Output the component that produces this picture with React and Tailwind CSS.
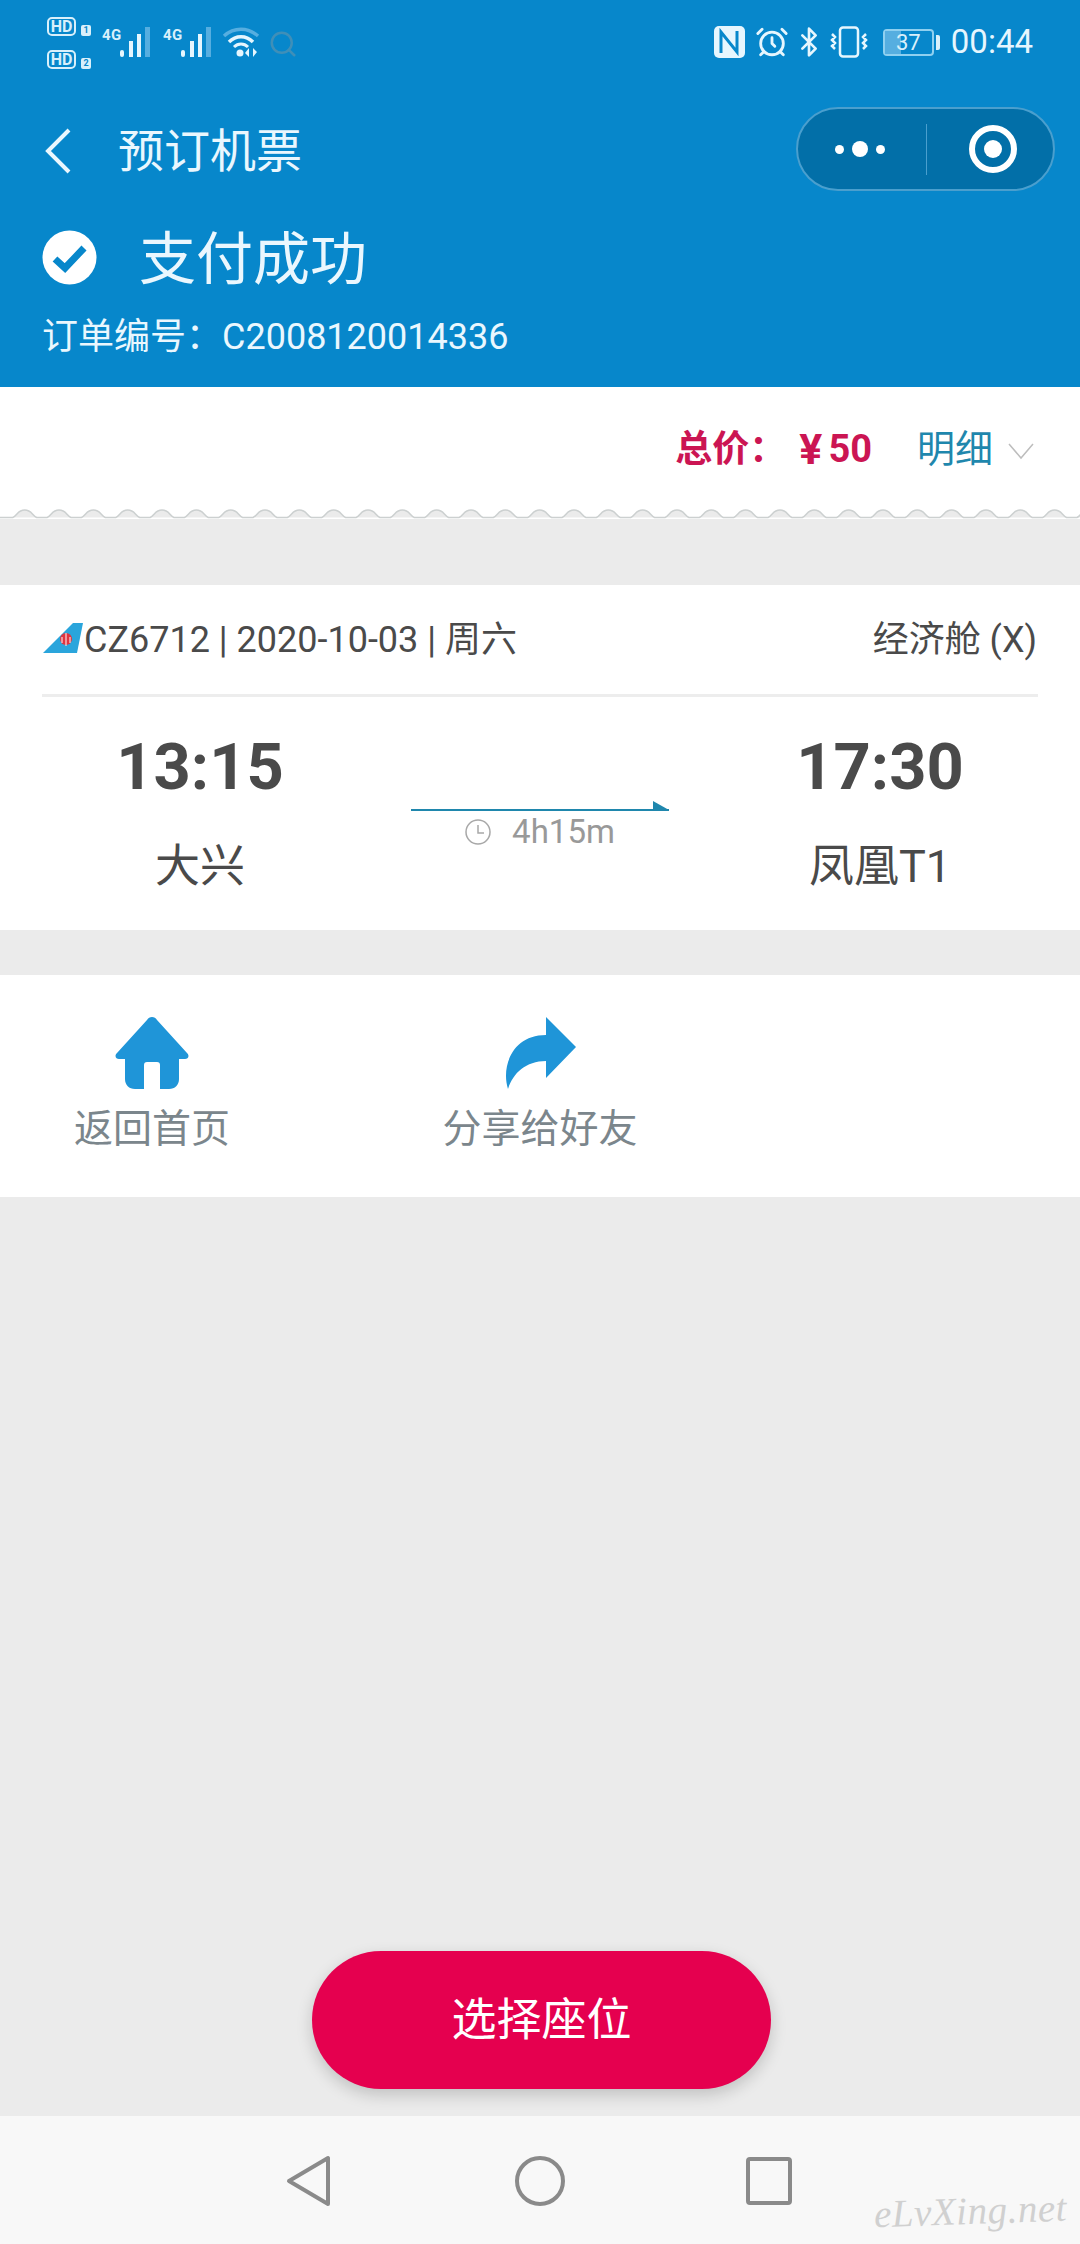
import { AlarmClock, Bluetooth, Search } from 'lucide-react';

const font = { fontFamily: 'Roboto, "Noto Sans CJK SC", sans-serif' };

const SimCard = ({ n }) => (
	<div className="flex items-end gap-[5px] h-[19px]">
		<div className="w-[29px] h-[19px] border-[2.5px] border-[#d9f0fb] rounded-[5px] flex items-center justify-center text-[16px] leading-none font-bold text-[#d9f0fb]">
			HD
		</div>
		<div className="w-[10px] h-[11px] bg-[#d9f0fb] rounded-[2px] flex items-center justify-center text-[9px] leading-none font-bold text-[#0787cb]">
			{n}
		</div>
	</div>
);

const Signal = () => (
	<div className="flex items-start w-[50px] h-[30px] relative">
		<span className="text-[15px] leading-[16px] font-bold text-[#d9f0fb] tracking-[0.5px]">4G</span>
		<svg width="32" height="30" viewBox="0 0 32 30" className="absolute left-[18px] top-0">
			<rect x="0" y="23" width="4" height="7" rx="2" fill="#e6f6fe" />
			<rect x="9" y="14" width="4" height="16" fill="#e6f6fe" />
			<rect x="17" y="7" width="4" height="23" fill="#e6f6fe" />
			<rect x="25" y="0" width="5" height="30" fill="#56aee0" />
		</svg>
	</div>
);

const Wifi = () => (
	<svg width="38" height="31" viewBox="0 0 38 31" fill="none">
		<path d="M2 9C12 0 26 0 36 9" stroke="#56aee0" strokeWidth="3.5" />
		<path d="M7 15C14 8 24 8 31 15" stroke="#e6f6fe" strokeWidth="3.5" />
		<path d="M12 20C16 16 22 16 26 20" stroke="#e6f6fe" strokeWidth="3" />
		<circle cx="18" cy="26" r="3.5" fill="#e6f6fe" />
		<path d="M27 21L27 30L23 26ZM31 21L35 25L31 30Z" fill="#e6f6fe" />
	</svg>
);

const Nfc = () => (
	<svg width="31" height="32" viewBox="0 0 31 32">
		<rect width="31" height="32" rx="5" fill="#e6f6fe" />
		<path d="M7 27V6L23 26V5" fill="none" stroke="#0787cb" strokeWidth="3" />
	</svg>
);

const Vibrate = () => (
	<svg width="40" height="32" viewBox="0 0 40 32" fill="none" stroke="#e6f6fe" strokeWidth="2.5">
		<rect x="11" y="1.5" width="18" height="29" rx="3" />
		<path d="M3 8l3 3-3 3 3 3-3 3 3 3M37 8l-3 3 3 3-3 3 3 3-3 3" />
	</svg>
);

const Battery = () => (
	<div className="flex items-center gap-[2px]">
		<div className="relative w-[51px] h-[27px] border-2 border-[#8fd0f0] rounded-[4px] flex items-center justify-center text-[22px] leading-none text-[#d9f0fb]">
			<div className="absolute left-0 top-0 bottom-0 w-[16px] bg-[#56aee0]" />
			<span className="relative">37</span>
		</div>
		<div className="w-[4px] h-[15px] bg-[#d9f0fb] rounded-r-[2px]" />
	</div>
);

const StatusBar = () => (
	<div className="h-[90px] flex justify-between pl-[47px] pr-[47px] text-[#e6f6fe]">
		<div className="flex items-start pt-[17px]">
			<div className="flex flex-col gap-[14px] w-[55px]">
				<SimCard n="1" />
				<SimCard n="2" />
			</div>
			<div className="flex mt-[10px] gap-[11px]">
				<Signal />
				<Signal />
			</div>
			<div className="mt-[10px] ml-[9px]">
				<Wifi />
			</div>
			<Search size={30} strokeWidth={2} className="mt-[12px] ml-[8px] text-[#3f8fb8]" />
		</div>
		<div className="flex items-start pt-[26px]">
			<Nfc />
			<AlarmClock size={34} strokeWidth={2} className="ml-[10px] -mt-[1px]" />
			<Bluetooth size={32} strokeWidth={2} className="ml-[4px]" />
			<div className="ml-[4px]">
				<Vibrate />
			</div>
			<div className="ml-[14px] mt-[3px]">
				<Battery />
			</div>
			<span className="ml-[11px] text-[33px] leading-[32px]">00:44</span>
		</div>
	</div>
);

const Capsule = () => (
	<div className="w-[259px] h-[84px] rounded-full bg-[#026fa8] border-2 border-[#4a9fce] flex items-center">
		<div className="w-[128px] flex items-center justify-center gap-[8px] pr-[4px]">
			<span className="w-[9px] h-[9px] rounded-full bg-white" />
			<span className="w-[16px] h-[16px] rounded-full bg-white" />
			<span className="w-[9px] h-[9px] rounded-full bg-white" />
		</div>
		<div className="w-[1px] h-[51px] bg-[#4a9fce]" />
		<div className="flex-1 flex items-center justify-center pl-[6px]">
			<div className="w-[48px] h-[48px] rounded-full border-[6px] border-white flex items-center justify-center">
				<span className="w-[18px] h-[18px] rounded-full bg-white" />
			</div>
		</div>
	</div>
);

const Header = () => (
	<div className="h-[387px] bg-[#0787cb] text-white shrink-0">
		<StatusBar />
		<div className="h-[120px] flex items-start justify-between pl-[45px] pr-[25px] pt-[17px]">
			<div className="flex items-center h-[84px] pt-[3px]">
				<svg width="26" height="46" viewBox="0 0 26 46" fill="none" stroke="#eaf7fe" strokeWidth="4">
					<path d="M24 2L3 23L24 44" />
				</svg>
				<span className="ml-[47px] text-[46px] leading-none text-[#eaf7fe]">预订机票</span>
			</div>
			<Capsule />
		</div>
		<div className="flex items-center pl-[42px] h-[90px] mt-[4px]">
			<svg width="55" height="55" viewBox="0 0 55 55" className="-mt-[3px]">
				<circle cx="27.5" cy="27.5" r="27" fill="white" />
				<path d="M13 29L23 38L42 18" fill="none" stroke="#0787cb" strokeWidth="7" />
			</svg>
			<span className="ml-[42px] text-[57px] leading-none text-[#eaf7fe]">支付成功</span>
		</div>
		<div className="pl-[42px] mt-[11px] text-[36px] leading-[44px] text-[#eaf7fe]">
			订单编号：C2008120014336
		</div>
	</div>
);

const Scallop = () => {
	// 34px period bumps along the torn edge of the price strip
	const bumps = Array.from({ length: 32 }, (_, i) => 24.7 + i * 34.33);
	const d = bumps.map((x) => `M${x - 12} 8.5C${x - 7} 6 ${x - 7} 1 ${x} 1C${x + 7} 1 ${x + 7} 6 ${x + 12} 8.5Z`).join('');
	const line = bumps.reduce(
		(acc, x) => `${acc}L${x - 12} 8.5C${x - 7} 6 ${x - 7} 1 ${x} 1C${x + 7} 1 ${x + 7} 6 ${x + 12} 8.5`,
		'M-20 8.5',
	);
	return (
		<svg width="1080" height="10" viewBox="0 0 1080 10" className="block">
			<path d={d} fill="#ebebeb" />
			<path d={line} fill="none" stroke="#ccd0d0" strokeWidth="1.5" />
		</svg>
	);
};

const PriceRow = () => (
	<div className="shrink-0">
		<div className="h-[122px] bg-white flex items-center justify-end pr-[46px] pt-[2px]">
			<span className="text-[37px] leading-none font-bold text-[#cb1553]">总价：</span>
			<span className="ml-[13px] text-[43px] leading-none font-bold text-[#cb1553]">¥</span>
			<span className="ml-[6px] text-[38px] leading-none font-bold text-[#cb1553]">50</span>
			<span className="ml-[45px] text-[38px] leading-none text-[#1f87ad]">明细</span>
			<svg width="26" height="17" viewBox="0 0 26 17" fill="none" stroke="#bdbdbd" strokeWidth="1.5" className="ml-[15px] mt-[4px]">
				<path d="M1 1L13 15L25 1" />
			</svg>
		</div>
		<div className="bg-white">
			<Scallop />
		</div>
	</div>
);

const FlightCard = () => (
	<div className="h-[345px] bg-white mt-[66px] shrink-0 text-[#4a4a4a]">
		<div className="mx-[42px] h-[112px] border-b-[3px] border-[#ededed] flex items-center justify-between">
			<div className="flex items-center">
				<svg width="42" height="32" viewBox="0 0 42 32" className="shrink-0 -mt-[4px]">
					<path d="M1 31L31 1H41L35 31Z" fill="#2aa5dc" />
					<circle cx="24" cy="17" r="6" fill="#e0343f" />
					<path d="M24 11V24M20 15V21M28 15V21" stroke="#f7d9dc" strokeWidth="1.2" />
				</svg>
				<span className="text-[36px] leading-none">CZ6712 | 2020-10-03 | 周六</span>
			</div>
			<span className="text-[36px] leading-none mr-[1px]">经济舱 (X)</span>
		</div>
		<div className="flex">
			<div className="w-[400px] flex flex-col items-center pt-[30px]">
				<span className="text-[65px] leading-[80px] font-bold">13:15</span>
				<span className="mt-[30px] text-[45px] leading-[60px]">大兴</span>
			</div>
			<div className="w-[280px] px-[11px] pt-[112px]">
				<div className="relative h-[2px] bg-[#1f87ad]">
					<svg width="16" height="9" viewBox="0 0 16 9" className="absolute right-0 -top-[8px]">
						<path d="M0 0L16 9H0Z" fill="#1f87ad" />
					</svg>
				</div>
				<div className="flex items-center justify-center mt-[6px] text-[#999999]">
					<svg width="26" height="26" viewBox="0 0 26 26" fill="none" stroke="#a8a8a8" strokeWidth="1.5">
						<circle cx="13" cy="13" r="12" />
						<path d="M13 6V14H19" />
					</svg>
					<span className="ml-[21px] text-[33px] leading-[30px]">4h15m</span>
				</div>
			</div>
			<div className="w-[400px] flex flex-col items-center pt-[30px]">
				<span className="text-[65px] leading-[80px] font-bold">17:30</span>
				<span className="mt-[30px] text-[45px] leading-[60px]">凤凰T1</span>
			</div>
		</div>
	</div>
);

const Actions = () => (
	<div className="h-[222px] bg-white mt-[45px] shrink-0 flex text-[#7b868c] pt-[42px]">
		<div className="w-[304px] flex flex-col items-center">
			<svg width="74" height="72" viewBox="0 0 74 72">
				<path
					d="M37 0C39 0 41 1 42 3L72 36C75 39 73 42 70 42H64V62C64 68 60 72 54 72H45V48C45 46 44 45 42 45H32C30 45 29 46 29 48V72H20C14 72 10 68 10 62V42H4C1 42 -1 39 2 36L32 3C33 1 35 0 37 0Z"
					fill="#1f95d8"
				/>
			</svg>
			<span className="mt-[18px] text-[39px] leading-[44px]">返回首页</span>
		</div>
		<div className="w-[472px] flex flex-col items-center">
			<svg width="72" height="72" viewBox="0 0 72 72">
				<path d="M42 0L72 30L42 61V44C22 44 9 56 4 72C-3 50 8 18 42 18Z" fill="#1f95d8" />
			</svg>
			<span className="mt-[18px] text-[39px] leading-[44px]">分享给好友</span>
		</div>
	</div>
);

const NavBar = () => (
	<div className="h-[128px] bg-[#f8f8f8] shrink-0 relative flex items-start pt-[39px]">
		<svg width="46" height="52" viewBox="0 0 46 52" fill="none" stroke="#8a8a8a" strokeWidth="4" strokeLinejoin="round" className="ml-[286px]">
			<path d="M42 3V49L3 26Z" />
		</svg>
		<svg width="52" height="52" viewBox="0 0 52 52" fill="none" stroke="#8a8a8a" strokeWidth="4" className="ml-[182px]">
			<circle cx="26" cy="26" r="23" />
		</svg>
		<svg width="46" height="48" viewBox="0 0 46 48" fill="none" stroke="#8a8a8a" strokeWidth="4" strokeLinejoin="round" className="ml-[180px] mt-[2px]">
			<rect x="2" y="2" width="42" height="44" rx="2" />
		</svg>
		<span
			className="absolute left-[874px] top-[75px] text-[39px] leading-none italic text-[#d0d0d0] tracking-[0.5px] -rotate-2"
			style={{ fontFamily: '"Liberation Serif", serif' }}>
			eLvXing.net
		</span>
	</div>
);

const App = () => (
	<div className="w-[1080px] h-[2244px] bg-[#ebebeb] flex flex-col overflow-hidden" style={font}>
		<Header />
		<PriceRow />
		<FlightCard />
		<Actions />
		<div className="flex-1 flex flex-col items-center justify-end pb-[27px]">
			<button className="w-[459px] h-[138px] ml-[3px] rounded-[69px] bg-[#e5004f] text-white text-[45px] leading-none shadow-[0_6px_16px_rgba(0,0,0,0.18)]">
				选择座位
			</button>
		</div>
		<NavBar />
	</div>
);

export default App;
